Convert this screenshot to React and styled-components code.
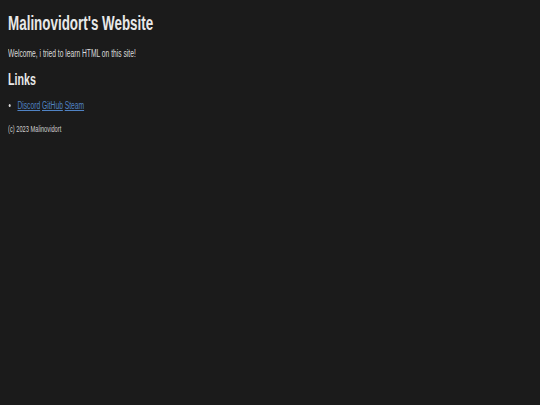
import React from "react";
import styled, { createGlobalStyle } from "styled-components";

const Global = createGlobalStyle`
  html, body {
    margin: 0;
    background: #1b1b1b;
  }
  body {
    min-height: 405px;
    font-family: "Liberation Sans", Arial, sans-serif;
    color: #dcdcdc;
  }
`;

/* the page text is rendered condensed */
const Page = styled.div`
  padding: 12px 12px;
  transform: scaleX(0.67);
  transform-origin: left top;
`;

const Title = styled.h1`
  margin: 0;
  font-size: 20px;
  font-weight: bold;
  color: #e8e8e8;
`;

const Intro = styled.p`
  margin: 13px 0 0;
  font-size: 10px;
`;

const SubTitle = styled.h2`
  margin: 12px 0 0;
  font-size: 16px;
  font-weight: bold;
  color: #e8e8e8;
`;

const List = styled.ul`
  margin: 11px 0 0;
  padding-left: 14px;
  font-size: 10px;
  list-style: disc;
`;

const Link = styled.a`
  color: #5083c4;
  text-decoration: underline;
`;

const Footer = styled.footer`
  margin-top: 13px;
  font-size: 8.5px;
  font-weight: normal;
  color: #cfcfcf;
`;

export default function App() {
  return (
    <Page>
      <Global />
      <Title>Malinovidort's Website</Title>
      <Intro>Welcome, i tried to learn HTML on this site!</Intro>
      <SubTitle>Links</SubTitle>
      <List>
        <li>
          <Link href="#">Discord</Link> <Link href="#">GitHub</Link>{" "}
          <Link href="#">Steam</Link>
        </li>
      </List>
      <Footer>(c) 2023 Malinovidort</Footer>
    </Page>
  );
}
